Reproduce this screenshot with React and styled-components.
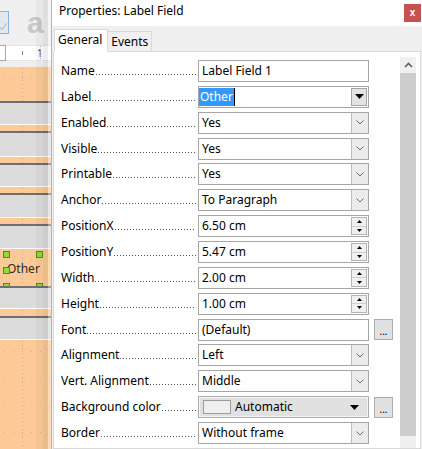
import React from "react";
import styled, { createGlobalStyle, css } from "styled-components";

const Global = createGlobalStyle`
  html, body { margin: 0; padding: 0; background: #f0f0f0; }
  body { width: 422px; height: 449px; overflow: hidden; }
  * { box-sizing: border-box; }
`;

const UI_FONT = `"Noto Sans", "Open Sans", "DejaVu Sans", sans-serif`;

const Screen = styled.div`
  display: flex;
  width: 422px;
  height: 449px;
  overflow: hidden;
  font-family: ${UI_FONT};
  font-size: 12px;
  color: #000;
`;

/* ---------- left: report designer canvas ---------- */
const Canvas = styled.div`
  position: relative;
  width: 51px;
  flex: none;
  display: flex;
  flex-direction: column;
  overflow: hidden;
  background: #f0f0f0;
  &::after {
    content: "";
    position: absolute;
    inset: 0;
    pointer-events: none;
    background: linear-gradient(
      to right,
      transparent 0,
      transparent 36px,
      rgba(0, 0, 0, 0.035) 36px,
      rgba(0, 0, 0, 0.035) 43px,
      rgba(0, 0, 0, 0.07) 43px,
      rgba(0, 0, 0, 0.07) 48px,
      rgba(255, 255, 255, 0.35) 48px
    );
  }
`;

const Toolbar = styled.div`
  height: 40px;
  flex: none;
  display: flex;
  align-items: flex-start;
  padding-top: 11px;
`;

const ToolButton = styled.div`
  width: 23px;
  height: 23px;
  margin-left: -14px;
  border: 1px solid #86b3dd;
  background: #e3e8ee;
  display: flex;
  align-items: flex-end;
  justify-content: flex-end;
  padding: 0 1px 3px 0;
`;

const FontworkGlyph = styled.span`
  margin-left: 18px;
  margin-top: -3px;
  font-family: "Liberation Sans", Arial, sans-serif;
  font-weight: bold;
  font-size: 30px;
  line-height: 30px;
  color: #c9c9c9;
`;

const Ruler = styled.div`
  margin-top: 5px;
  height: 16px;
  flex: none;
  display: flex;
`;

const RulerMargin = styled.div`
  width: 6px;
  border: 1px solid #a8a8a8;
  border-left: none;
  background: #fff;
`;

const RulerScale = styled.div`
  position: relative;
  flex: 1;
  background: #fff;
  border-top: 1px solid #e6e6e6;
  border-bottom: 1px solid #e6e6e6;
`;

const Tick = styled.span`
  position: absolute;
  left: ${(p) => p.$x}px;
  top: 5px;
  width: 1px;
  height: 4px;
  background: #808080;
`;

const RulerNum = styled.span`
  position: absolute;
  left: ${(p) => p.$x}px;
  top: 0px;
  font-size: 10px;
  line-height: 14px;
  color: #444;
`;

const RulerDots = styled.span`
  position: absolute;
  left: ${(p) => p.$x}px;
  top: 0;
  bottom: 0;
  width: 1px;
  background: repeating-linear-gradient(to bottom, #b0b0b0 0 1px, transparent 1px 3px);
`;

const bandColors = {
  orange: "#fdca97",
  gray: "#dcdcdc",
  line: "#6f6f6f",
  white: "#ffffff",
  pane: "#f0f0f0",
};

const gridDots = css`
  background-image: repeating-linear-gradient(to bottom, #c2ae9b 0 1px, transparent 1px 4px),
    radial-gradient(circle at 0.5px 0.5px, #cdb8a3 0.7px, transparent 0.8px);
  background-size: 1px 100%, 9px 27px;
  background-position: 22px 1px, 4px 11px;
  background-repeat: no-repeat, repeat;
`;

const Band = styled.div`
  flex: ${(p) => (p.$grow ? 1 : "none")};
  position: relative;
  height: ${(p) => p.$h}px;
  background-color: ${(p) => bandColors[p.$kind]};
  ${(p) => p.$kind === "orange" && gridDots}
`;

const FieldCaption = styled.span`
  position: absolute;
  left: 7px;
  top: 12px;
  font-size: 12px;
  line-height: 16px;
  color: #2a2a2a;
`;

const Handle = styled.span`
  position: absolute;
  left: ${(p) => p.$x}px;
  top: ${(p) => p.$y}px;
  width: 7px;
  height: 7px;
  background: #8fdb3c;
  border: 1px solid #4c8f12;
`;

/* ---------- right: properties dialog ---------- */
const Dialog = styled.div`
  flex: 1;
  min-width: 0;
  display: flex;
  flex-direction: column;
  border-left: 1px solid #b4b4b4;
  background: #f0f0f0;
`;

const TitleBar = styled.div`
  height: 26px;
  flex: none;
  background: #fff;
  display: flex;
  justify-content: space-between;
  align-items: flex-start;
  padding: 0 1px 0 7px;
`;

const Title = styled.span`
  font-size: 12px;
  line-height: 16px;
  margin-top: 3px;
`;

const CloseButton = styled.div`
  width: 17px;
  height: 18px;
  margin-top: 4px;
  background: #c75050;
  color: #fff;
  display: flex;
  align-items: center;
  justify-content: center;
  font-family: "Liberation Sans", Arial, sans-serif;
  font-weight: bold;
  font-size: 10px;
  line-height: 10px;
  padding-bottom: 1px;
`;

const TabRow = styled.div`
  display: flex;
  align-items: flex-end;
  height: 23px;
  margin: 3px 0 -1px 2px;
  position: relative;
  z-index: 1;
`;

const Tab = styled.div`
  height: ${(p) => (p.$active ? 23 : 21)}px;
  padding: 0 ${(p) => (p.$active ? 5 : 3)}px 0 3px;
  border: 1px solid #d9d9d9;
  border-bottom: ${(p) => (p.$active ? "1px solid #fff" : "1px solid #d9d9d9")};
  ${(p) => !p.$active && "border-left: none;"}
  background: ${(p) => (p.$active ? "#fff" : "#f0f0f0")};
  font-size: 12px;
  line-height: ${(p) => (p.$active ? 20 : 19)}px;
`;

const Panel = styled.div`
  flex: 1;
  min-height: 0;
  margin: 0 1px;
  border: 1px solid #d9d9d9;
  background: #fff;
  display: flex;
  padding: 5px 4px 0 7px;
  overflow: hidden;
`;

const Form = styled.div`
  display: flex;
  flex-direction: column;
  gap: 3.86px;
  margin-top: 3px;
  width: 332px;
  flex: none;
`;

const Row = styled.div`
  display: flex;
  align-items: center;
  height: 22px;
  flex: none;
`;

const Label = styled.div`
  width: 137px;
  height: 22px;
  flex: none;
  display: flex;
  align-items: flex-start;
  padding-right: 2px;
  font-size: 12px;
  line-height: 22px;
  white-space: nowrap;
  color: #000;
`;

const Leader = styled.span`
  flex: 1;
  height: 1px;
  margin: 14px 0 0 1px;
  background: repeating-linear-gradient(to right, #555 0 1px, transparent 1px 3px);
`;

const Box = styled.div`
  width: 171px;
  height: 22px;
  flex: none;
  display: flex;
  align-items: stretch;
  border: 1px solid #a6a6a6;
  background: #fff;
`;

const Value = styled.span`
  flex: 1;
  min-width: 0;
  padding-left: ${(p) => (p.$pad ?? 3)}px;
  font-size: 12px;
  line-height: 20px;
  white-space: nowrap;
`;

const Selection = styled.span`
  display: inline-block;
  background: #3399ff;
  color: #fff;
  margin-top: 1px;
  padding: 0 1px 0 1px;
  line-height: 18px;
  border-right: 1px solid #000;
`;

const ChevronButton = styled.div`
  width: 17px;
  flex: none;
  border-left: 1px solid #bdbdbd;
  background: #ececec;
  display: flex;
  align-items: center;
  justify-content: center;
`;

const ArrowButton = styled.div`
  width: 16px;
  flex: none;
  margin: 1px;
  border: 1px solid #a6a6a6;
  background: #e3e3e3;
  display: flex;
  align-items: center;
  justify-content: center;
`;

const Spin = styled.div`
  width: 16px;
  flex: none;
  margin: 1px 1px 1px 0;
  border: 1px solid #b4b4b4;
  background: #f0f0f0;
  display: flex;
  flex-direction: column;
`;

const SpinHalf = styled.div`
  flex: 1;
  display: flex;
  align-items: center;
  justify-content: center;
  & + & {
    border-top: 1px solid #cfcfcf;
  }
`;

const ColorBox = styled.div`
  width: 171px;
  height: 22px;
  flex: none;
  display: flex;
  align-items: center;
  border: 1px solid #adadad;
  box-shadow: inset 0 0 0 1px #f4f4f4;
  background: #e1e1e1;
  padding: 0 9px 0 4px;
`;

const Swatch = styled.span`
  width: 28px;
  height: 14px;
  flex: none;
  border: 1px solid #9c9c9c;
  background: #efefef;
`;

const ColorName = styled.span`
  flex: 1;
  padding-left: 4px;
  font-size: 12px;
  line-height: 20px;
`;

const DotsButton = styled.div`
  width: 19px;
  height: 21px;
  margin-left: 5px;
  flex: none;
  border: 1px solid #adadad;
  background: #e1e1e1;
  display: flex;
  justify-content: center;
  align-items: flex-end;
  font-size: 10px;
  line-height: 14px;
  padding-bottom: 1px;
`;

const Scrollbar = styled.div`
  width: 16px;
  flex: none;
  margin-left: 7px;
  display: flex;
  flex-direction: column;
  background: #f0f0f0;
`;

const ScrollUp = styled.div`
  height: 16px;
  flex: none;
  display: flex;
  align-items: center;
  justify-content: center;
`;

const ScrollThumb = styled.div`
  height: 363px;
  flex: none;
  background: #cdcdcd;
`;

/* ---------- small drawings ---------- */
const Chevron = () => (
  <svg width="8" height="5" viewBox="0 0 8 5">
    <path d="M0.5 0.5 L4 4 L7.5 0.5" fill="none" stroke="#6b6b6b" strokeWidth="1" />
  </svg>
);

const Triangle = () => (
  <svg width="9" height="5" viewBox="0 0 9 5">
    <path d="M0 0 H9 L4.5 5 Z" fill="#000" />
  </svg>
);

const SpinArrow = ({ up }) => (
  <svg width="5" height="3" viewBox="0 0 5 3">
    <path d={up ? "M0 3 H5 L2.5 0 Z" : "M0 0 H5 L2.5 3 Z"} fill="#000" />
  </svg>
);

const ScrollChevron = () => (
  <svg width="9" height="6" viewBox="0 0 9 6">
    <path d="M1 5 L4.5 1.5 L8 5" fill="none" stroke="#606060" strokeWidth="1.6" />
  </svg>
);

const CheckMark = () => (
  <svg width="8" height="7" viewBox="0 0 8 7">
    <path d="M0.5 4 L3 6.5 L7.5 0.5" fill="none" stroke="#a9a9a9" strokeWidth="1" />
  </svg>
);

const rows = [
  { label: "Name", type: "text", value: "Label Field 1" },
  { label: "Label", type: "label", value: "Other" },
  { label: "Enabled", type: "select", value: "Yes" },
  { label: "Visible", type: "select", value: "Yes" },
  { label: "Printable", type: "select", value: "Yes" },
  { label: "Anchor", type: "select", value: "To Paragraph" },
  { label: "PositionX", type: "spin", value: "6.50 cm" },
  { label: "PositionY", type: "spin", value: "5.47 cm" },
  { label: "Width", type: "spin", value: "2.00 cm" },
  { label: "Height", type: "spin", value: "1.00 cm" },
  { label: "Font", type: "text", value: "(Default)", more: true },
  { label: "Alignment", type: "select", value: "Left" },
  { label: "Vert. Alignment", type: "select", value: "Middle" },
  { label: "Background color", type: "color", value: "Automatic", more: true },
  { label: "Border", type: "select", value: "Without frame" },
];

const Field = ({ row }) => {
  switch (row.type) {
    case "label":
      return (
        <Box>
          <Value $pad={0}>
            <Selection>{row.value}</Selection>
          </Value>
          <ArrowButton>
            <Triangle />
          </ArrowButton>
        </Box>
      );
    case "select":
      return (
        <Box>
          <Value>{row.value}</Value>
          <ChevronButton>
            <Chevron />
          </ChevronButton>
        </Box>
      );
    case "spin":
      return (
        <Box>
          <Value>{row.value}</Value>
          <Spin>
            <SpinHalf>
              <SpinArrow up />
            </SpinHalf>
            <SpinHalf>
              <SpinArrow />
            </SpinHalf>
          </Spin>
        </Box>
      );
    case "color":
      return (
        <ColorBox>
          <Swatch />
          <ColorName>{row.value}</ColorName>
          <Triangle />
        </ColorBox>
      );
    default:
      return (
        <Box>
          <Value>{row.value}</Value>
        </Box>
      );
  }
};

export default function App() {
  return (
    <>
      <Global />
      <Screen>
        <Canvas>
          <Toolbar>
            <ToolButton>
              <CheckMark />
            </ToolButton>
            <FontworkGlyph>a</FontworkGlyph>
          </Toolbar>
          <Ruler>
            <RulerMargin />
            <RulerScale>
              <Tick $x={16} />
              <RulerNum $x={31}>1</RulerNum>
              <RulerDots $x={34} />
            </RulerScale>
          </Ruler>
          <Band $kind="pane" $h={6} />
          <Band $kind="orange" $h={34} />
          <Band $kind="line" $h={2} />
          <Band $kind="gray" $h={21} />
          <Band $kind="white" $h={1} />
          <Band $kind="orange" $h={6} />
          <Band $kind="line" $h={2} />
          <Band $kind="gray" $h={23} />
          <Band $kind="white" $h={1} />
          <Band $kind="orange" $h={6} />
          <Band $kind="line" $h={2} />
          <Band $kind="gray" $h={21} />
          <Band $kind="white" $h={1} />
          <Band $kind="orange" $h={6} />
          <Band $kind="line" $h={2} />
          <Band $kind="gray" $h={22} />
          <Band $kind="white" $h={1} />
          <Band $kind="orange" $h={6} />
          <Band $kind="line" $h={2} />
          <Band $kind="gray" $h={22} />
          <Band $kind="white" $h={1} />
          <Band $kind="orange" $h={37}>
            <FieldCaption>Other</FieldCaption>
            <Handle $x={3} $y={2} />
            <Handle $x={36} $y={2} />
            <Handle $x={3} $y={18} />
            <Handle $x={3} $y={34} />
            <Handle $x={36} $y={34} />
          </Band>
          <Band $kind="line" $h={2} />
          <Band $kind="gray" $h={20} />
          <Band $kind="white" $h={1} />
          <Band $kind="orange" $h={7} />
          <Band $kind="line" $h={2} />
          <Band $kind="gray" $h={21} />
          <Band $kind="white" $h={1} />
          <Band $kind="orange" $h={110} $grow />
        </Canvas>

        <Dialog>
          <TitleBar>
            <Title>Properties: Label Field</Title>
            <CloseButton>x</CloseButton>
          </TitleBar>
          <TabRow>
            <Tab $active>General</Tab>
            <Tab>Events</Tab>
          </TabRow>
          <Panel>
            <Form>
              {rows.map((row) => (
                <Row key={row.label}>
                  <Label>
                    {row.label}
                    <Leader />
                  </Label>
                  <Field row={row} />
                  {row.more && <DotsButton>...</DotsButton>}
                </Row>
              ))}
            </Form>
            <Scrollbar>
              <ScrollUp>
                <ScrollChevron />
              </ScrollUp>
              <ScrollThumb />
            </Scrollbar>
          </Panel>
        </Dialog>
      </Screen>
    </>
  );
}
